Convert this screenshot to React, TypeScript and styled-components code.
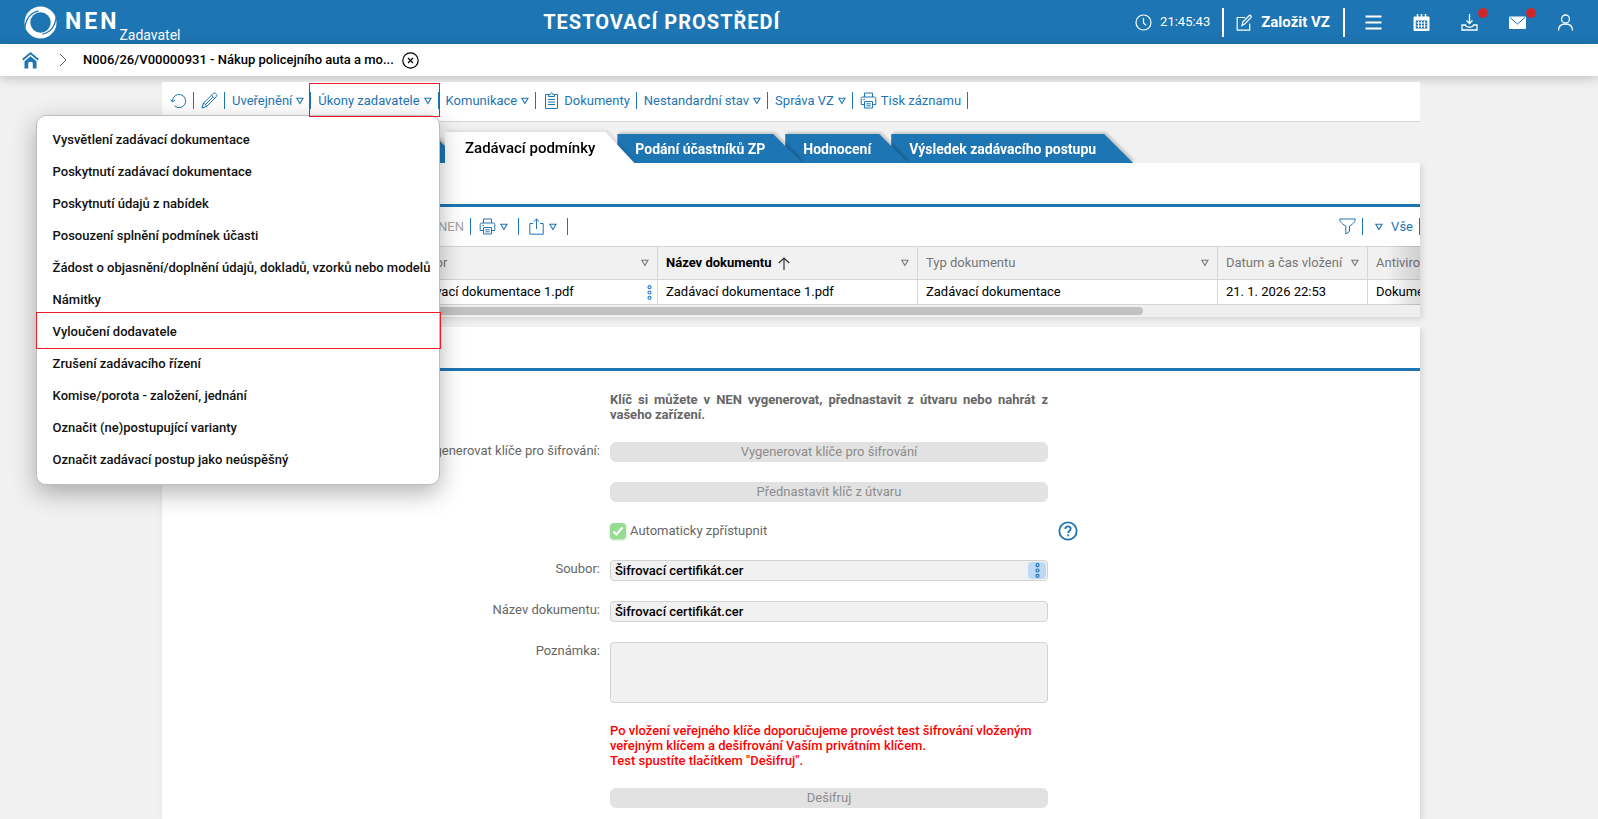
import React from 'react';
import styled, { createGlobalStyle, css } from 'styled-components';

const blue = '#1e75b3';
const red = '#ed1c24';
const grey = '#767676';
const line = '#d6d6d6';

const GlobalStyle = createGlobalStyle`
  * { box-sizing: border-box; }
  body {
    margin: 0;
    background: #f1f1f1;
    font-family: Roboto, "Liberation Sans", sans-serif;
    font-size: 13px;
    line-height: 18px;
    color: #000;
  }
  button, input, textarea { font: inherit; color: inherit; }
  a { color: inherit; text-decoration: none; }
  svg { display: block; flex: none; }
`;

const Page = styled.div`
  display: flex;
  flex-direction: column;
  min-height: 100vh;
`;

/* ---------- header ---------- */

const Header = styled.header`
  display: flex;
  align-items: center;
  justify-content: space-between;
  height: 44px;
  padding: 0 24px;
  background: ${blue};
  color: #fff;
`;

const Brand = styled.a`
  display: flex;
  align-items: center;
  height: 44px;
  padding-right: 8px;
`;

const BrandName = styled.span`
  margin-left: 8px;
  font-size: 23px;
  font-weight: 700;
  letter-spacing: 3px;
`;

const BrandRole = styled.span`
  align-self: flex-end;
  font-size: 14px;
`;

const Environment = styled.h1`
  margin: 0;
  font-size: 20px;
  font-weight: 700;
  letter-spacing: 1px;
`;

const HeaderActions = styled.div`
  display: flex;
  align-items: center;
`;

const Clock = styled.div`
  display: flex;
  align-items: center;
  gap: 8px;
  padding-right: 12px;
`;

const PlainButton = styled.button`
  display: flex;
  align-items: center;
  padding: 0;
  border: 0;
  background: none;
  cursor: pointer;
`;

const CreateButton = styled(PlainButton)`
  gap: 8px;
  height: 29px;
  padding: 0 13px 0 12px;
  border: solid #fff;
  border-width: 0 2px;
  font-size: 15px;
  font-weight: 700;
`;

const IconRow = styled.nav`
  display: flex;
  gap: 31px;
  margin-left: 20px;
`;

const HeaderIcon = styled(PlainButton)`
  position: relative;
`;

const Badge = styled.span`
  position: absolute;
  top: -6px;
  left: 17px;
  width: 10px;
  height: 10px;
  border-radius: 50%;
  background: #cc2a2a;
`;

/* ---------- breadcrumb ---------- */

const Breadcrumb = styled.nav`
  position: relative;
  display: flex;
  align-items: center;
  height: 32px;
  padding: 0 22px;
  background: #fff;
  font-weight: 500;
  box-shadow: 0 2px 12px rgba(0, 0, 0, 0.22);
`;

const Chevron = styled.span`
  margin: 0 16px 0 20px;
`;

const CloseButton = styled(PlainButton)`
  margin-left: 8px;
`;

/* ---------- page body ---------- */

const Body = styled.div`
  display: flex;
  flex: 1;
  padding-right: 16px;
`;

const Main = styled.main`
  display: flex;
  flex: 1;
  flex-direction: column;
  max-width: 1258px;
  margin: 0 auto;
  padding-top: 6px;
`;

const Toolbar = styled.div`
  position: relative;
  z-index: 10;
  display: flex;
  align-items: center;
  height: 40px;
  padding: 0 0 2px 8px;
  border-bottom: 1px solid ${line};
  background: #fff;
  color: ${blue};
`;

const ToolItem = styled.div<{ $start?: number; $end?: number }>`
  position: relative;
  display: flex;
  align-items: center;
  height: 17px;
  padding: 0 ${(p) => p.$end ?? 6}px 0 ${(p) => p.$start ?? 7}px;
  border-right: 1px solid ${blue};
`;

const ToolButton = styled(PlainButton)<{ $gap?: number }>`
  gap: ${(p) => p.$gap ?? 4}px;
  white-space: nowrap;
`;

const ItemMarker = styled.span`
  position: absolute;
  z-index: 3;
  top: -9px;
  right: -2px;
  bottom: -8px;
  left: -2px;
  border: 1px solid ${red};
  pointer-events: none;
`;

const Menu = styled.ul`
  position: absolute;
  z-index: 2;
  top: 23px;
  right: -2px;
  width: 404px;
  margin: 0;
  padding: 8px 0;
  border: 1px solid #bdbdbd;
  border-radius: 10px;
  background: #fff;
  box-shadow: 0 8px 24px rgba(0, 0, 0, 0.3);
  color: #111;
  list-style: none;
`;

const MenuItem = styled.li`
  position: relative;
`;

const MenuButton = styled(PlainButton)`
  width: 100%;
  height: 32px;
  padding: 0 16px;
  font-weight: 500;
  white-space: nowrap;
`;

const MenuMarker = styled.span`
  position: absolute;
  top: -4px;
  right: -2px;
  bottom: -1px;
  left: -1px;
  border: 1px solid ${red};
  pointer-events: none;
`;

/* ---------- tabs ---------- */

const Tabs = styled.div`
  display: flex;
  align-items: flex-end;
  height: 31px;
  margin-top: 10px;
`;

const Tab = styled.button<{ $active?: boolean; $order: number }>`
  position: relative;
  z-index: ${(p) => p.$order};
  height: ${(p) => (p.$active ? 31 : 29)}px;
  margin: 0 0 0 -17px;
  padding: 0 ${(p) => (p.$active ? 39 : 37)}px 0 ${(p) => (p.$active ? 20 : 18)}px;
  border: 0;
  background: none;
  color: ${(p) => (p.$active ? '#000' : '#fff')};
  font-size: ${(p) => (p.$active ? 15 : 14)}px;
  font-weight: ${(p) => (p.$active ? 500 : 700)};
  text-align: left;
  white-space: nowrap;
  filter: drop-shadow(2px -2px 1px rgba(0, 0, 0, ${(p) => (p.$active ? 0.08 : 0.16)}));

  &:first-child {
    flex: 0 0 300px;
    margin-left: 0;
  }

  &::before {
    content: '';
    position: absolute;
    z-index: -1;
    inset: 0;
    background: ${(p) => (p.$active ? '#fff' : blue)};
    clip-path: polygon(0 0, calc(100% - 29px) 0, 100% 100%, 0 100%);
  }
`;

/* ---------- cards ---------- */

const Card = styled.section<{ $grow?: boolean }>`
  position: relative;
  z-index: 6;
  flex: ${(p) => (p.$grow ? '1' : 'none')};
  margin-bottom: ${(p) => (p.$grow ? 0 : 10)}px;
  background: #fff;
  box-shadow: 2px 2px 6px rgba(0, 0, 0, 0.12);
  clip-path: inset(0 -10px -10px -10px);
`;

const CardHead = styled.div`
  height: 44px;
  border-bottom: 3px solid ${blue};
`;

const GridToolbar = styled.div`
  display: flex;
  align-items: center;
  height: 39px;
  color: ${blue};
`;

const GridText = styled.button`
  width: 302px;
  padding: 0;
  border: 0;
  background: none;
  color: #a3a3a3;
  text-align: right;
`;

const Spacer = styled.span`
  flex: 1;
`;

const TableWrap = styled.div`
  position: relative;
  overflow: hidden;

  &::after {
    content: '';
    position: absolute;
    inset: 0 0 0 auto;
    width: 34px;
    background: linear-gradient(to right, rgba(0, 0, 0, 0), rgba(0, 0, 0, 0.14));
  }
`;

const DataTable = styled.table`
  width: 1610px;
  table-layout: fixed;
  border-collapse: separate;
  border-spacing: 0;

  th, td {
    padding: 0 8px;
    border: solid ${line};
    border-width: 0 1px 1px 0;
    text-align: left;
    white-space: nowrap;
  }
  th {
    height: 34px;
    border-top-width: 1px;
    background: #f1f1f1;
    color: ${grey};
    font-weight: 400;
  }
  td { height: 25px; }
`;

const CellLine = styled.div`
  display: flex;
  align-items: center;
  justify-content: space-between;
`;

const SortedLabel = styled.span`
  display: flex;
  align-items: center;
  gap: 6px;
  color: #000;
  font-weight: 700;
`;

const RowMore = styled(PlainButton)`
  margin-right: -3px;
  color: #2f7fd0;
`;

const ScrollTrack = styled.div`
  height: 12px;
  padding: 2px 0;
  background: #efefef;
`;

const ScrollThumb = styled.div`
  width: 78%;
  height: 8px;
  border-radius: 4px;
  background: #c1c1c1;
`;

/* ---------- form ---------- */

const Form = styled.form`
  display: grid;
  grid-template-columns: 438fr 438fr 362fr;
  gap: 20px 10px;
  padding: 21px 0 11px;
`;

const Label = styled.label`
  grid-column: 1;
  color: #666;
  text-align: right;
`;

const Note = styled.p<{ $alert?: boolean }>`
  grid-column: 2;
  margin: 0;
  color: ${(p) => (p.$alert ? '#f00' : '#666')};
  font-weight: ${(p) => (p.$alert ? 500 : 700)};
  line-height: 15px;
  text-align: ${(p) => (p.$alert ? 'left' : 'justify')};
`;

const ActionButton = styled.button`
  grid-column: 2;
  height: 20px;
  padding: 0;
  border: 0;
  border-radius: 6px;
  background: #e2e2e2;
  color: #8c8c8c;
`;

const fieldBox = css`
  width: 100%;
  border: 1px solid #d2d2d2;
  border-radius: 4px;
  background: #f1f1f1;
  font-weight: 500;
`;

const Field = styled.div`
  position: relative;
  grid-column: 2;
  display: flex;
`;

const TextInput = styled.input`
  ${fieldBox}
  height: 21px;
  padding: 0 4px;
`;

const TextArea = styled.textarea`
  ${fieldBox}
  height: 61px;
  resize: none;
`;

const FieldMore = styled(PlainButton)`
  position: absolute;
  top: 2px;
  right: 2px;
  justify-content: center;
  width: 18px;
  height: 17px;
  border-radius: 4px;
  background: #bfd9f5;
  color: ${blue};
`;

const CheckLabel = styled.label`
  grid-column: 2;
  display: flex;
  align-items: center;
  gap: 4px;
  height: 18px;
  color: #666;
`;

const CheckBox = styled.input`
  width: 16px;
  height: 16px;
  margin: 0;
  border-radius: 4px;
  appearance: none;
  background: #97dc93 url("data:image/svg+xml,%3Csvg xmlns='http://www.w3.org/2000/svg' viewBox='0 0 16 16'%3E%3Cpath d='M3.5 8.5l3 3 6-7' fill='none' stroke='white' stroke-width='2.2'/%3E%3C/svg%3E");
  box-shadow: 0 1px 2px rgba(110, 200, 110, 0.6);
`;

const HelpButton = styled(PlainButton)`
  grid-column: 3;
  height: 18px;
  color: ${blue};
`;

/* ---------- icons ---------- */

type IconProps = { size?: number; w?: number; children: React.ReactNode };

const Icon = ({ size = 17, w = 1, children }: IconProps) => (
  <svg width={size} height={size} viewBox="0 0 17 17" fill="none" stroke="currentColor" strokeWidth={w} aria-hidden="true">
    {children}
  </svg>
);

const Triangle = () => (
  <svg width="8" height="8" viewBox="0 0 8 8" fill="none" stroke="currentColor" strokeWidth="1.1" aria-hidden="true">
    <path d="M.8 1.2h6.2L3.9 6.5z" />
  </svg>
);

const Dots = () => (
  <svg width="5" height="15" viewBox="0 0 5 15" fill="none" stroke="currentColor" strokeWidth="1.2" aria-hidden="true">
    <circle cx="2.5" cy="2.2" r="1.5" />
    <circle cx="2.5" cy="7.5" r="1.5" />
    <circle cx="2.5" cy="12.8" r="1.5" />
  </svg>
);

/* Two crescents that swirl round a hollow centre. */
const Logo = () => (
  <svg width="33" height="33" viewBox="0 0 33 33" aria-hidden="true">
    <circle cx="16.5" cy="16.5" r="16" fill="#fff" />
    <circle cx="16.5" cy="16.5" r="10.2" fill={blue} />
    <path d="M.8 22C2 11.500 7.500 6.500 14.500 4.800" fill="none" stroke={blue} strokeWidth="1.300" />
    <path d="M32.200 11C31 21.500 25.500 26.500 18.500 28.200" fill="none" stroke={blue} strokeWidth="1.300" />
  </svg>
);

const Home = () => (
  <svg width="17" height="17" viewBox="0 0 17 17" fill={blue} aria-hidden="true">
    <path d="M2.500 9.200L8.500 4.200l6 5V16.500H10.800V11.500c0-1-.8-1.700-2.300-1.700s-2.300.7-2.300 1.700v5H2.500z" />
    <path d="M.7 7.800L8.500 1.200l7.800 6.600" fill="none" stroke={blue} strokeWidth="1.800" />
  </svg>
);

const Printer = () => (
  <Icon>
    <path d="M4.500 5V1h8v4M4.500 12.500H1.200v-6c0-1 .5-1.500 1.300-1.500h12c.8 0 1.300.5 1.300 1.500v6H12.500M4.500 9.500h8v6.500h-8zM6.300 11.800h4.400M6.300 13.800h4.400M3.200 7.300h1.600" />
  </Icon>
);

const Refresh = () => (
  <Icon>
    <path d="M2.500 9.500a6.600 6.600 0 1 1 2 4.300M.6 7.800l2 2.200 2.300-1.900" />
  </Icon>
);

const Pencil = () => (
  <Icon>
    <path d="M1 16l1.200-4.500L12 1.700c1-.9 2-.9 3 .1s1.100 2 .2 3L5.500 14.600zM2.200 11.500c2 .2 3 1.200 3.300 3.100M10.500 3.200l3.300 3.300M4 13l7.800-7.800" />
  </Icon>
);

const Clipboard = () => (
  <Icon>
    <path d="M5.500 2.500H2.500v14h12v-14h-3M5.500 4.500v-2h1.600c.2-2.200 2.600-2.200 2.800 0h1.600v2zM5 7.500h7M5 10h7M5 12.500h7" />
  </Icon>
);

const Share = () => (
  <Icon>
    <path d="M5 5.500H1.800V16.200h13.400V5.500H12M8.500 11V1M5.700 3.700L8.500 1l2.800 2.700" />
  </Icon>
);

const Funnel = () => (
  <Icon>
    <path d="M.8 1h15.400c0 2.600-1 4.200-5.700 7v5.300L6.800 16V8C2 5.200.8 3.600.8 1z" />
  </Icon>
);

/* ---------- data ---------- */

const menuItems = [
  'Vysvětlení zadávací dokumentace',
  'Poskytnutí zadávací dokumentace',
  'Poskytnutí údajů z nabídek',
  'Posouzení splnění podmínek účasti',
  'Žádost o objasnění/doplnění údajů, dokladů, vzorků nebo modelů',
  'Námitky',
  'Vyloučení dodavatele',
  'Zrušení zadávacího řízení',
  'Komise/porota - založení, jednání',
  'Označit (ne)postupující varianty',
  'Označit zadávací postup jako neúspěšný',
];

const columns = ['Typ dokumentu', 'Datum a čas vložení', 'Antivirová kontrola'];

const Drop = ({ label }: { label: string }) => (
  <ToolItem>
    <ToolButton>{label}<Triangle /></ToolButton>
  </ToolItem>
);

export default function App() {
  return (
    <Page>
      <GlobalStyle />
      <Header>
        <Brand href="#">
          <Logo />
          <BrandName>NEN</BrandName>
          <BrandRole>Zadavatel</BrandRole>
        </Brand>
        <Environment>TESTOVACÍ PROSTŘEDÍ</Environment>
        <HeaderActions>
          <Clock>
            <Icon w={1.2}><circle cx="8.5" cy="8.5" r="7.5" /><path d="M8.500 4v5l2.500 2.200" /></Icon>
            21:45:43
          </Clock>
          <CreateButton>
            <Icon w={1.2}><path d="M9 3.500H1.200v12.700h12.500V9.500M6 11.500l.8-3.500L13.300 1.500c.8-.8 2.600.9 1.800 1.800L8.800 9.900z" /></Icon>
            Založit VZ
          </CreateButton>
          <IconRow>
            <HeaderIcon aria-label="Menu">
              <Icon w={2}><path d="M.5 2.500h16M.5 8.500h16M.5 14.500h16" /></Icon>
            </HeaderIcon>
            <HeaderIcon aria-label="Kalendář">
              <Icon w={1}>
                <path d="M1 3h15v13.500H1z" fill="currentColor" />
                <path d="M4.500 0v4M8.500 0v4M12.500 0v4" strokeWidth="1.5" />
                <path d="M2.800 6.500h11.400v8H2.800z" fill={blue} stroke="none" />
                <path d="M3.500 9h10M3.500 12h10M5.500 7v7M8.500 7v7M11.500 7v7" />
              </Icon>
            </HeaderIcon>
            <HeaderIcon aria-label="Stahování">
              <Icon w={1.3}><path d="M8.500 0v9M5.500 6.500l3 3 3-3M1 11h3.500c.5 3 7.500 3 8 0H16v5H1z" /></Icon>
              <Badge />
            </HeaderIcon>
            <HeaderIcon aria-label="Zprávy">
              <Icon><rect x="0" y="2.5" width="17" height="12.5" rx="1" fill="currentColor" stroke="none" /><path d="M1 3.500l7.500 6.500L16 3.500" stroke={blue} /></Icon>
              <Badge />
            </HeaderIcon>
            <HeaderIcon aria-label="Uživatel">
              <Icon w={1.3}><circle cx="8.5" cy="5" r="4" /><path d="M1.500 16.500c0-4.500 3-6.500 7-6.500s7 2 7 6.500" /></Icon>
            </HeaderIcon>
          </IconRow>
        </HeaderActions>
      </Header>

      <Breadcrumb aria-label="Navigace">
        <a href="#" aria-label="Domů"><Home /></a>
        <Chevron>
          <svg width="8" height="14" viewBox="0 0 8 14" fill="none" stroke="#555" aria-hidden="true"><path d="M1 1l6 6-6 6" /></svg>
        </Chevron>
        <a href="#">N006/26/V00000931 - Nákup policejního auta a mo...</a>
        <CloseButton aria-label="Zavřít">
          <Icon w={1.2}><circle cx="8.5" cy="8.5" r="7.7" /><path d="M6 6l5 5M11 6l-5 5" /></Icon>
        </CloseButton>
      </Breadcrumb>

      <Body>
        <Main>
          <Toolbar>
            <ToolItem $start={0}><ToolButton aria-label="Obnovit"><Refresh /></ToolButton></ToolItem>
            <ToolItem><ToolButton aria-label="Upravit"><Pencil /></ToolButton></ToolItem>
            <Drop label="Uveřejnění" />
            <ToolItem>
              <ToolButton aria-expanded="true">Úkony zadavatele<Triangle /></ToolButton>
              <Menu>
                {menuItems.map((item) => (
                  <MenuItem key={item}>
                    <MenuButton>{item}</MenuButton>
                    {item === 'Vyloučení dodavatele' && <MenuMarker />}
                  </MenuItem>
                ))}
              </Menu>
              <ItemMarker />
            </ToolItem>
            <Drop label="Komunikace" />
            <ToolItem><ToolButton><Clipboard />Dokumenty</ToolButton></ToolItem>
            <Drop label="Nestandardní stav" />
            <Drop label="Správa VZ" />
            <ToolItem><ToolButton><Printer />Tisk záznamu</ToolButton></ToolItem>
          </Toolbar>

          <Tabs role="tablist">
            <Tab role="tab" $order={1} aria-label="Zadávací postup" />
            <Tab role="tab" aria-selected="true" $active $order={5}>Zadávací podmínky</Tab>
            <Tab role="tab" $order={4}>Podání účastníků ZP</Tab>
            <Tab role="tab" $order={3}>Hodnocení</Tab>
            <Tab role="tab" $order={2}>Výsledek zadávacího postupu</Tab>
          </Tabs>

          <Card>
            <CardHead />
            <GridToolbar>
              <GridText disabled>NEN</GridText>
              <ToolItem $start={0} />
              <ToolItem $start={8} $end={10}><ToolButton aria-label="Tisk"><Printer /><Triangle /></ToolButton></ToolItem>
              <ToolItem $start={9} $end={10}><ToolButton aria-label="Export"><Share /><Triangle /></ToolButton></ToolItem>
              <Spacer />
              <ToolItem><ToolButton aria-label="Filtr"><Funnel /></ToolButton></ToolItem>
              <ToolItem $start={12}><ToolButton $gap={8}><Triangle />Vše</ToolButton></ToolItem>
            </GridToolbar>
            <TableWrap>
              <DataTable>
                <colgroup>
                  <col width="236" /><col width="260" /><col width="260" /><col width="300" /><col width="150" /><col />
                </colgroup>
                <thead>
                  <tr>
                    <th />
                    <th><CellLine>Soubor<Triangle /></CellLine></th>
                    <th aria-sort="ascending">
                      <CellLine>
                        <SortedLabel>
                          Název dokumentu
                          <svg width="12" height="13" viewBox="0 0 12 13" fill="none" stroke="#333" strokeWidth="1.2" aria-hidden="true"><path d="M6 13V1M.8 6L6 1l5.200 5" /></svg>
                        </SortedLabel>
                        <Triangle />
                      </CellLine>
                    </th>
                    {columns.map((c) => <th key={c}><CellLine>{c}<Triangle /></CellLine></th>)}
                  </tr>
                </thead>
                <tbody>
                  <tr>
                    <td />
                    <td>
                      <CellLine>
                        Zadávací dokumentace 1.pdf
                        <RowMore aria-label="Možnosti"><Dots /></RowMore>
                      </CellLine>
                    </td>
                    <td>Zadávací dokumentace 1.pdf</td>
                    <td>Zadávací dokumentace</td>
                    <td>21. 1. 2026 22:53</td>
                    <td>Dokument</td>
                  </tr>
                </tbody>
              </DataTable>
            </TableWrap>
            <ScrollTrack><ScrollThumb /></ScrollTrack>
          </Card>

          <Card $grow>
            <CardHead />
            <Form>
              <Note>Klíč si můžete v NEN vygenerovat, přednastavit z útvaru nebo nahrát z vašeho zařízení.</Note>
              <Label htmlFor="generate">Vygenerovat klíče pro šifrování:</Label>
              <ActionButton id="generate" type="button">Vygenerovat klíče pro šifrování</ActionButton>
              <ActionButton type="button">Přednastavit klíč z útvaru</ActionButton>
              <CheckLabel><CheckBox type="checkbox" defaultChecked />Automaticky zpřístupnit</CheckLabel>
              <HelpButton type="button" aria-label="Nápověda">
                <svg width="20" height="20" viewBox="0 0 20 20" fill="none" stroke="currentColor" strokeWidth="1.8" aria-hidden="true">
                  <circle cx="10" cy="10" r="8.7" />
                  <path d="M7.300 8c0-3.600 5.400-3.400 5.400-.3 0 2-2.600 2.100-2.600 4.300M10.100 13.500v1.800" />
                </svg>
              </HelpButton>
              <Label htmlFor="file">Soubor:</Label>
              <Field>
                <TextInput id="file" readOnly value="Šifrovací certifikát.cer" />
                <FieldMore type="button" aria-label="Možnosti souboru"><Dots /></FieldMore>
              </Field>
              <Label htmlFor="name">Název dokumentu:</Label>
              <Field><TextInput id="name" readOnly value="Šifrovací certifikát.cer" /></Field>
              <Label htmlFor="note">Poznámka:</Label>
              <Field><TextArea id="note" readOnly /></Field>
              <Note $alert>
                Po vložení veřejného klíče doporučujeme provést test šifrování vloženým veřejným klíčem a dešifrování Vaším privátním klíčem.<br />
                Test spustíte tlačítkem "Dešifruj".
              </Note>
              <ActionButton type="button">Dešifruj</ActionButton>
            </Form>
          </Card>
        </Main>
      </Body>
    </Page>
  );
}
